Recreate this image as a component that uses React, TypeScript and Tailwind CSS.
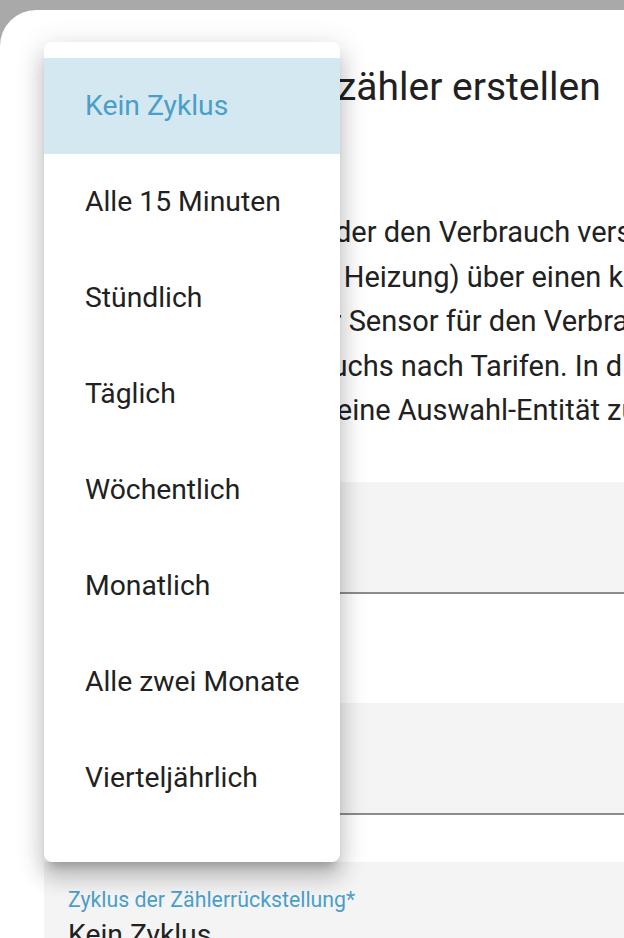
import { X } from 'lucide-react';

const cycles = [
  'Kein Zyklus',
  'Alle 15 Minuten',
  'Stündlich',
  'Täglich',
  'Wöchentlich',
  'Monatlich',
  'Alle zwei Monate',
  'Vierteljährlich',
  'Jährlich',
];

const descriptionLines = [
  'Erstelle einen Sensor, der den Verbrauch verschiedener Versorgungsleistungen',
  '(Energie, Gas, Wasser, Heizung) über einen konfigurierten Zeitraum,',
  'typisch monatlich. Der Sensor für den Verbrauchszähler unterstützt optional die',
  'Aufteilung des Verbrauchs nach Tarifen. In diesem Fall wird für jeden',
  'Tarif ein Zähler sowie eine Auswahl-Entität zur Auswahl des aktuellen Tarifs erstellt.',
];

function FilledField({ label, value, className }: { label: string; value?: string; className?: string }) {
  return (
    <div className={`bg-[#f4f4f4] border-b-2 border-[#8c8c8c] h-[112px] px-[24px] pt-[25.5px] ${className ?? ''}`}>
      <div className="text-[21.3px] leading-[24px] text-[#4a9fc8]">{label}</div>
      {value && <div className="mt-[7px] text-[28.3px] leading-[32px] text-[#212121]">{value}</div>}
    </div>
  );
}

export default function App() {
  const selected = 'Kein Zyklus';

  return (
    <div className="w-[624px] h-[938px] bg-[#a9a9a9] overflow-hidden pt-[10px] font-['Roboto',sans-serif]">
      <div className="relative w-[900px] h-[928px] bg-white rounded-tl-[36px] overflow-hidden">
        <div className="pl-[44px] pt-[53px]">
          <div className="flex items-center gap-[40px] h-[48px]">
            <X className="w-[56px] h-[28px] text-[#212121]" strokeWidth={2} />
            <h2 className="text-[39px] leading-[48px] text-[#212121] whitespace-nowrap">Verbrauchszähler erstellen</h2>
          </div>

          <div className="mt-[99px] ml-[10px] text-[29px] leading-[44.5px] text-[#212121] whitespace-nowrap">
            {descriptionLines.map((line) => (
              <div key={line}>{line}</div>
            ))}
          </div>

          <FilledField label="Name*" className="mt-[49.5px]" />
          <FilledField label="Eingangssensor*" className="mt-[109px]" />
          <FilledField label="Zyklus der Zählerrückstellung*" value="Kein Zyklus" className="mt-[47px] h-[200px]" />
        </div>

        {/* dropdown menu */}
        <div className="absolute left-[44px] top-[32px] w-[296px] h-[820px] bg-white rounded-[8px] overflow-hidden py-[16px] shadow-[0_10px_10px_-6px_rgba(0,0,0,0.2),0_16px_20px_2px_rgba(0,0,0,0.14),0_6px_28px_4px_rgba(0,0,0,0.12)]">
          {cycles.map((c) => (
            <div
              key={c}
              className={`h-[96px] flex items-center pl-[41px] text-[28.3px] ${
                c === selected ? 'bg-[#d4e8f1] text-[#4a9fc8]' : 'text-[#212121]'
              }`}
            >
              {c}
            </div>
          ))}
        </div>
      </div>
    </div>
  );
}
